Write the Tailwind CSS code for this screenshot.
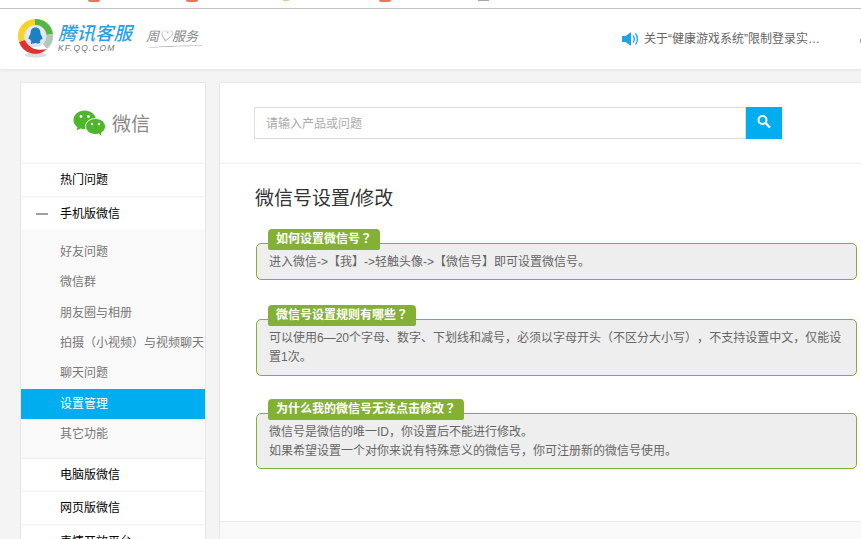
<!DOCTYPE html>
<html lang="zh-CN">
<head>
<meta charset="utf-8">
<title>微信号设置/修改</title>
<script src="https://cdn.jsdelivr.net/npm/@tailwindcss/browser@4"></script>
</head>
<body class="w-[861px] h-[539px] overflow-hidden bg-[#f4f4f4] font-['Liberation_Sans','Noto_Sans_CJK_SC',sans-serif] text-xs [text-spacing-trim:space-all]">
  <!-- browser-cropped strip -->
  <div class="h-[9px] bg-white border-b border-[#c4c4c4] flex items-start overflow-hidden">
    <span class="ml-[88px] w-[12px] h-[2px] rounded-b-full bg-[#f4705f]"></span>
    <span class="ml-[86px] w-[12px] h-[2px] rounded-b-full bg-[#f4705f]"></span>
    <span class="ml-[85px] w-[6px] h-[1px] bg-[#a8e88a]"></span>
    <span class="ml-[90px] w-[12px] h-[2px] rounded-b-full bg-[#f4705f]"></span>
    <span class="ml-[87px] w-[11px] h-[1px] bg-[#a8a8a8]"></span>
  </div>

  <!-- header -->
  <header class="h-[60px] bg-white flex items-center shadow-[0_1px_3px_rgba(0,0,0,0.08)] relative">
    <div class="ml-[17px] mt-[-3px] w-[37px] h-[40px] shrink-0">
      <svg viewBox="0 0 37 40" width="37" height="40">
        <defs>
          <radialGradient id="core" cx="50%" cy="45%" r="55%"><stop offset="0%" stop-color="#ffffff"/><stop offset="100%" stop-color="#d8e0e6"/></radialGradient>
        </defs>
        <ellipse cx="18.500" cy="37" rx="11" ry="2.500" fill="#dcdcdc"/>
        <path d="M18 1 A17 17 0 0 0 2 24 L8 22 A10.500 10.500 0 0 1 18 8 Z" fill="#f5d327"/>
        <path d="M18 1 A17 17 0 0 1 36 16 L29 17 A10.500 10.500 0 0 0 18 8 Z" fill="#57b548"/>
        <path d="M36 16 A17 17 0 0 1 30 31 L26 26 A10.500 10.500 0 0 0 29 17 Z" fill="#b4c8b8"/>
        <path d="M2 24 A17 17 0 0 0 30 31 C22 33 13 32 8 22 Z" fill="#e2302f"/>
        <circle cx="18.500" cy="18" r="11" fill="url(#core)"/>
        <path d="M18.500 9.500 C15 9.500 13.500 12 13.500 15 C13.500 16.500 12 18 11.500 20 C11.500 22 12.500 21.500 13 21 C13.500 22.500 14 23 14.500 23.500 C13 24.500 14 25.500 16.500 25.500 C17.500 25.500 18 25 18.500 25 C19 25 19.500 25.500 20.500 25.500 C23 25.500 24 24.500 22.500 23.500 C23 23 23.500 22.500 24 21 C24.500 21.500 25.500 22 25.500 20 C25 18 23.500 16.500 23.500 15 C23.500 12 22 9.500 18.500 9.500 Z" fill="#1d7fc4"/>
      </svg>
    </div>
    <div class="ml-[4px] mt-[-1px] w-[78px] flex flex-col shrink-0">
      <span class="text-[18.500px] leading-[20px] italic font-medium text-[#2f9fe3] whitespace-nowrap">腾讯客服</span>
      <span class="text-[8.500px] leading-[9px] italic text-[#777] tracking-[1.100px] whitespace-nowrap">KF.QQ.COM</span>
    </div>
    <div class="ml-[10px] mt-[-1px] w-[56px] flex flex-col shrink-0">
      <span class="text-[13px] leading-[14px] italic text-[#888] whitespace-nowrap">周♡服务</span>
      <svg viewBox="0 0 56 3" width="56" height="3" class="mt-[1px]"><path d="M0 3 C15 1 35 0.500 56 0.500 L56 1 C35 1 15 2 0 3 Z" fill="#aaa"/></svg>
    </div>
    <div class="ml-[420px] mt-[-1px] flex items-center shrink-0">
      <svg viewBox="0 0 17 14" width="17" height="14" fill="#1fa3e4">
        <path d="M0 4 H3.500 L9 0 V14 L3.500 10 H0 Z"/>
        <path d="M11 3.500 C12.500 5.500 12.500 8.500 11 10.500" fill="none" stroke="#1fa3e4" stroke-width="1.300"/>
        <path d="M13.500 1.500 C16 4.500 16 9.500 13.500 12.500" fill="none" stroke="#1fa3e4" stroke-width="1.300"/>
      </svg>
      <span class="ml-[5px] w-[176px] text-[#666] whitespace-nowrap">关于“健康游戏系统”限制登录实…</span>
    </div>
    <span class="ml-[40px] mt-[4px] w-[2px] h-[4px] bg-[#aaa] shrink-0"></span>
  </header>

  <div class="flex items-start pl-[20px] pt-[13px]">
    <!-- sidebar -->
    <aside class="w-[186px] h-[470px] shrink-0 bg-white border border-[#e6e6e6] overflow-hidden">
      <div class="h-[81px] flex items-center pl-[52px] border-b border-[#f0f0f0] pt-[2px]">
        <svg viewBox="0 0 33 28" width="33" height="28">
          <path d="M12 0.500 C5.500 0.500 0.500 4.500 0.500 10 C0.500 13 2 15.500 4.500 17.200 L3.500 20.500 L7.300 18.600 C8.500 19 10 19.200 11 19.200 C14 19.200 20 10 23 9 C22 4 17.500 0.500 12 0.500 Z" fill="#4fb52a"/>
          <path d="M22.500 8.500 C17 8.500 12.500 12 12.500 16.500 C12.500 21 17 24.500 22.500 24.500 C23.500 24.500 24.500 24.300 25.500 24 L29 26.800 L28.300 23 C30.800 21.500 32.500 19.200 32.500 16.500 C32.500 12 28 8.500 22.500 8.500 Z" fill="#4fb52a" stroke="#fff" stroke-width="1"/>
          <circle cx="8" cy="6.500" r="1.400" fill="#fff"/><circle cx="15.500" cy="6.500" r="1.400" fill="#fff"/>
          <circle cx="19" cy="14" r="1.200" fill="#fff"/><circle cx="26" cy="14" r="1.200" fill="#fff"/>
        </svg>
        <span class="ml-[6px] text-[19px] text-[#888] leading-none">微信</span>
      </div>
      <div class="h-[33px] flex items-center pl-[39px] border-b border-[#f0f0f0] text-black">热门问题</div>
      <div class="h-[32px] flex items-center text-black pt-[1px]">
        <span class="ml-[15px] w-[12px] h-[2px] bg-[#9aa1ab]"></span>
        <span class="ml-[12px]">手机版微信</span>
      </div>
      <div class="h-[230px] bg-[#f9f9f9] pt-[8px] border-b border-[#f0f0f0] text-[#777]">
        <div class="h-[30.330px] flex items-center pl-[39px]">好友问题</div>
        <div class="h-[30.330px] flex items-center pl-[39px]">微信群</div>
        <div class="h-[30.330px] flex items-center pl-[39px]">朋友圈与相册</div>
        <div class="h-[30.330px] flex items-center pl-[39px] whitespace-nowrap">拍摄<span class="font-['Liberation_Sans','Noto_Sans_CJK_TC']">（</span>小视频<span class="font-['Liberation_Sans','Noto_Sans_CJK_TC']">）</span>与视频聊天</div>
        <div class="h-[30.330px] flex items-center pl-[39px]">聊天问题</div>
        <div class="h-[30.330px] flex items-center pl-[39px] bg-[#00aeef] text-white">设置管理</div>
        <div class="h-[30.330px] flex items-center pl-[39px]">其它功能</div>
      </div>
      <div class="h-[33px] flex items-center pl-[39px] border-b border-[#f0f0f0] text-black">电脑版微信</div>
      <div class="h-[33px] flex items-center pl-[39px] border-b border-[#f0f0f0] text-black">网页版微信</div>
      <div class="h-[33px] flex items-center pl-[39px] text-black">表情开放平台</div>
    </aside>

    <!-- main -->
    <main class="ml-[13px] w-[660px] h-[470px] shrink-0 bg-white border border-[#e6e6e6] rounded-tl-[2px] flex flex-col">
      <div class="h-[81px] flex items-center pl-[34px] pb-[1px] border-b border-[#f0f0f0] shrink-0">
        <div class="w-[492px] h-[32px] border border-[#dddddd] flex items-center pl-[11px] pt-[2px] text-[#aaa]">请输入产品或问题</div>
        <button class="w-[36px] h-[32px] bg-[#00aeef] flex items-center justify-center">
          <svg viewBox="0 0 16 16" width="16" height="16" fill="none" stroke="#fff" class="mt-[-1px]">
            <circle cx="6.500" cy="6" r="4" stroke-width="2"/>
            <path d="M9.500 9 L14 13.500" stroke-width="2.400"/>
          </svg>
        </button>
      </div>
      <div class="flex-1 pl-[35px]">
        <h1 class="mt-[22px] text-[19px] leading-[26px] text-[#333] font-normal">微信号设置/修改</h1>

        <section class="relative mt-[31px] ml-[1px] w-[601px] h-[37px] bg-[#eeeeee] border border-[#80b135] rounded-[5px] pl-[12px] pt-[9px] leading-[19px] text-[#666]">
          <span class="absolute left-[11px] top-[-15px] h-[21px] px-[8px] flex items-center bg-[#84b135] rounded-t-[4px] rounded-b-[2px] font-bold text-white">如何设置微信号<span class="font-['Liberation_Sans','Noto_Sans_CJK_TC']">？</span></span>
          进入微信-&gt;【我】-&gt;轻触头像-&gt;【微信号】即可设置微信号。
        </section>

        <section class="relative mt-[39px] ml-[1px] w-[601px] h-[57px] bg-[#eeeeee] border border-[#80b135] rounded-[5px] pl-[12px] pr-[10px] pt-[9px] leading-[19px] text-[#666]">
          <span class="absolute left-[11px] top-[-15px] h-[21px] px-[8px] flex items-center bg-[#84b135] rounded-t-[4px] rounded-b-[2px] font-bold text-white">微信号设置规则有哪些<span class="font-['Liberation_Sans','Noto_Sans_CJK_TC']">？</span></span>
          可以使用6—20个字母、数字、下划线和减号<span class="font-['Liberation_Sans','Noto_Sans_CJK_TC']">，</span>必须以字母开头<span class="font-['Liberation_Sans','Noto_Sans_CJK_TC']">（</span>不区分大小写<span class="font-['Liberation_Sans','Noto_Sans_CJK_TC']">）</span><span class="font-['Liberation_Sans','Noto_Sans_CJK_TC']">，</span>不支持设置中文<span class="font-['Liberation_Sans','Noto_Sans_CJK_TC']">，</span>仅能设<br>置1次。
        </section>

        <section class="relative mt-[37px] ml-[1px] w-[601px] h-[56px] bg-[#eeeeee] border border-[#80b135] rounded-[5px] pl-[12px] pt-[9px] leading-[19px] text-[#666]">
          <span class="absolute left-[11px] top-[-15px] h-[21px] px-[8px] flex items-center bg-[#84b135] rounded-t-[4px] rounded-b-[2px] font-bold text-white">为什么我的微信号无法点击修改<span class="font-['Liberation_Sans','Noto_Sans_CJK_TC']">？</span></span>
          微信号是微信的唯一ID<span class="font-['Liberation_Sans','Noto_Sans_CJK_TC']">，</span>你设置后不能进行修改。<br>如果希望设置一个对你来说有特殊意义的微信号<span class="font-['Liberation_Sans','Noto_Sans_CJK_TC']">，</span>你可注册新的微信号使用。
        </section>
      </div>
      <div class="h-[30px] bg-[#f9f9f9] border-t border-[#eeeeee] shrink-0"></div>
    </main>
  </div>
</body>
</html>
